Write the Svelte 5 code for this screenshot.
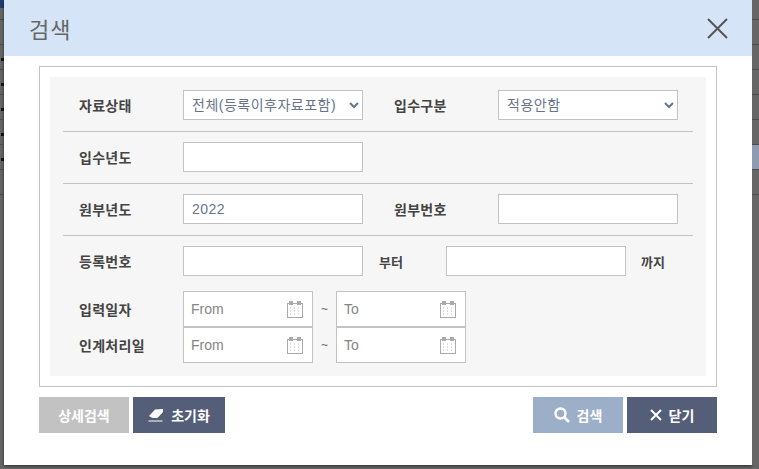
<script>
	const stripRows = [0, 1, 2, 3, 4, 5, 6];
	const dateRows = ['입력일자', '인계처리일'];
</script>

{#snippet calendar()}
	<svg class="cal" width="16" height="17" viewBox="0 0 16 17" aria-hidden="true">
		<rect x="0.5" y="2.5" width="15" height="14" fill="#fff" stroke="#aaa" />
		<path d="M3 1.5h2M11 1.5h2M5 2.5h6" stroke="#aaa" fill="none" />
		<rect x="2.5" y="0.5" width="3" height="3" fill="none" stroke="#aaa" />
		<rect x="10.5" y="0.5" width="3" height="3" fill="none" stroke="#aaa" />
		<path d="M3 7h2M7 7h2M11 7h2M3 10h2M7 10h2M11 10h2M3 13h2M7 13h2M11 13h2" stroke="#bbb" stroke-dasharray="1 1" />
	</svg>
{/snippet}

<div class="page">
	<div class="strip left">
		<div class="strip-top"></div>
		{#each stripRows as i}
			<div class="strip-row" class:marked={i > 0 && i < 6}></div>
		{/each}
	</div>

	<div class="modal">
		<header class="modal-head">
			<h1>검색</h1>
			<button class="close" aria-label="닫기">
				<svg width="21" height="21" viewBox="0 0 21 21">
					<path d="M1 1l19 19M20 1L1 20" stroke="#555" stroke-width="2" fill="none" />
				</svg>
			</button>
		</header>

		<div class="modal-body">
			<div class="box">
				<div class="form">
					<div class="row line">
						<span class="label">자료상태</span>
						<select class="field">
							<option>전체(등록이후자료포함)</option>
						</select>
						<span class="label second">입수구분</span>
						<select class="field">
							<option>적용안함</option>
						</select>
					</div>
					<div class="row line">
						<span class="label">입수년도</span>
						<input class="field" />
					</div>
					<div class="row line">
						<span class="label">원부년도</span>
						<input class="field" value="2022" />
						<span class="label second">원부번호</span>
						<input class="field" />
					</div>
					<div class="row">
						<span class="label">등록번호</span>
						<input class="field" />
						<span class="range-from">부터</span>
						<input class="field" />
						<span class="range-to">까지</span>
					</div>
					<div class="dates">
						{#each dateRows as name}
							<div class="date-row">
								<span class="label">{name}</span>
								<div class="date">
									<input placeholder="From" />
									{@render calendar()}
								</div>
								<span class="tilde">~</span>
								<div class="date">
									<input placeholder="To" />
									{@render calendar()}
								</div>
							</div>
						{/each}
					</div>
				</div>
			</div>

			<div class="actions">
				<div class="group">
					<button class="btn gray">상세검색</button>
					<button class="btn navy wide">
						<svg width="16" height="14" viewBox="0 0 16 14" aria-hidden="true">
							<path d="M1 8l6-6.5h0L15 1l0 3-5.5 6H4.500z" fill="#fff" />
							<path d="M0.500 13h14" stroke="#fff" stroke-width="1" />
						</svg>
						초기화
					</button>
				</div>
				<div class="group">
					<button class="btn blue">
						<svg width="16" height="16" viewBox="0 0 16 16" aria-hidden="true">
							<circle cx="6.500" cy="6.500" r="5" fill="none" stroke="#fff" stroke-width="2.400" />
							<path d="M10 10l5 5" stroke="#fff" stroke-width="2.600" />
						</svg>
						검색
					</button>
					<button class="btn navy">
						<svg width="12" height="12" viewBox="0 0 12 12" aria-hidden="true">
							<path d="M1 1l10 10M11 1L1 11" stroke="#fff" stroke-width="2" />
						</svg>
						닫기
					</button>
				</div>
			</div>
		</div>
	</div>

	<div class="strip right">
		<div class="strip-top blank"></div>
		{#each stripRows as i}
			<div class="strip-row" class:tinted={i === 5}></div>
		{/each}
	</div>
</div>

<style>
	:global(body) {
		margin: 0;
		background: #666;
	}

	.page {
		display: flex;
		width: 759px;
		height: 469px;
		overflow: hidden;
		background: #666;
		font-family: "Liberation Sans", "Noto Sans CJK KR", sans-serif;
	}

	.strip {
		flex: none;
		height: 465px;
		background: #666;
		overflow: hidden;
	}
	.strip.left { width: 4px; }
	.strip.right { width: 7px; }

	.strip-top {
		height: 20px;
		border-bottom: 1px solid #4c4c4c;
		box-sizing: border-box;
		background: linear-gradient(#1f3d6e 0 8px, #666 8px);
	}
	.strip-top.blank { background: #666; }

	.strip-row {
		position: relative;
		height: 25px;
		box-sizing: border-box;
		border-bottom: 1px solid #4c4c4c;
	}
	.strip-row.marked::after {
		content: "";
		position: absolute;
		left: 1px;
		top: 13px;
		width: 3px;
		height: 3px;
		background: #111;
	}
	.strip-row.tinted { background: #8e9bb0; }

	.modal {
		flex: none;
		width: 748px;
		height: 465px;
		background: #fff;
		box-shadow: 0 1px 3px rgba(0, 0, 0, 0.6);
	}

	.modal-head {
		display: flex;
		align-items: center;
		justify-content: space-between;
		height: 56px;
		padding: 0 24px 0 25px;
		box-sizing: border-box;
		background: #d5e4f6;
	}

	.modal-head h1 {
		margin: 0;
		font-size: 22px;
		font-weight: 400;
		letter-spacing: 1px;
		color: #666;
	}

	.close {
		display: flex;
		padding: 0;
		border: 0;
		background: none;
	}

	.modal-body { padding: 10px 35px 0; }

	.box {
		border: 1px solid #c3c3c3;
		padding: 10px;
	}

	.form {
		padding: 3px 13px 13px;
		background: #f6f6f6;
	}

	.row {
		display: flex;
		align-items: center;
		height: 30px;
		padding: 10px 0 11px 16px;
	}
	.row.line { border-bottom: 1px solid #c3c3c3; }

	.label {
		flex: none;
		width: 104px;
		font-size: 14px;
		font-weight: 700;
		color: #444;
		letter-spacing: 0.3px;
	}
	.label.second { margin-left: 31px; }

	.field {
		flex: none;
		width: 180px;
		height: 30px;
		box-sizing: border-box;
		border: 1px solid #c3c3c3;
		border-radius: 0;
		background: #fff;
		padding: 0 8px;
		font-family: inherit;
		font-size: 14px;
		color: #66758a;
		letter-spacing: 0.5px;
		outline: none;
	}
	select.field { padding: 0 0 0 4px; }

	.range-from {
		width: 67px;
		margin-left: 16px;
		font-size: 13px;
		font-weight: 700;
		color: #444;
	}
	.range-to {
		margin-left: 15px;
		font-size: 13px;
		font-weight: 700;
		color: #444;
	}

	.dates {
		padding: 4px 0 0 16px;
	}

	.date-row {
		display: flex;
		align-items: center;
		height: 36px;
	}

	.date {
		display: flex;
		align-items: center;
		width: 130px;
		height: 36px;
		box-sizing: border-box;
		border: 1px solid #c3c3c3;
		background: #fff;
		padding-right: 9px;
	}
	.date input {
		flex: 1;
		min-width: 0;
		height: 100%;
		box-sizing: border-box;
		border: 0;
		padding: 0 0 0 7px;
		background: none;
		font-family: inherit;
		font-size: 14px;
		color: #777;
		outline: none;
	}
	.date input::placeholder { color: #858585; }

	.cal { flex: none; }

	.tilde {
		width: 23px;
		text-align: center;
		font-size: 12px;
		color: #666;
	}

	.actions {
		display: flex;
		justify-content: space-between;
		margin-top: 10px;
	}

	.group {
		display: flex;
		gap: 4px;
	}

	.btn {
		display: flex;
		align-items: center;
		justify-content: center;
		gap: 7px;
		width: 90px;
		height: 36px;
		padding: 0;
		border: 0;
		font-family: inherit;
		font-size: 14px;
		font-weight: 700;
		color: #fff;
	}
	.btn.wide { width: 92px; }
	.gray { background: #c2c2c2; }
	.navy { background: #545e78; }
	.blue { background: #9cafc8; }
</style>
